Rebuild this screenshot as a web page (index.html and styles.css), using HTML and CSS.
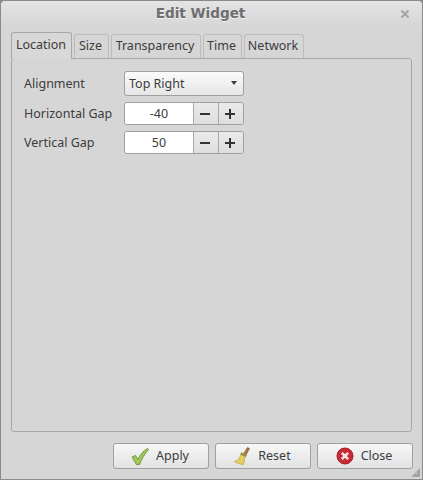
FILE: index.html
```html
<!DOCTYPE html>
<html lang="en">
<head>
<meta charset="utf-8">
<title>Edit Widget</title>
<link rel="stylesheet" href="styles.css">
</head>
<body>
<div class="window">
  <header class="titlebar">
    <span class="title">Edit Widget</span>
    <svg class="close-x" width="10" height="10" viewBox="0 0 10 10"><path d="M1.5 1.5L8.5 8.5M8.5 1.5L1.5 8.5" stroke="#a6a6a6" stroke-width="2.2"/></svg>
  </header>
  <div class="content">
    <nav class="tabs">
      <div class="tab active">Location</div>
      <div class="tab w-size">Size</div>
      <div class="tab w-trans">Transparency</div>
      <div class="tab w-time">Time</div>
      <div class="tab w-net">Network</div>
    </nav>
    <section class="panel">
      <div class="row">
        <label class="label">Alignment</label>
        <div class="combo"><span>Top Right</span><i class="caret"></i></div>
      </div>
      <div class="row">
        <label class="label">Horizontal Gap</label>
        <div class="spin">
          <div class="entry">-40</div>
          <div class="step"><svg width="10" height="10" viewBox="0 0 10 10"><path d="M0 5H10" stroke="#333" stroke-width="2"/></svg></div>
          <div class="step"><svg width="10" height="10" viewBox="0 0 10 10"><path d="M0 5H10M5 0V10" stroke="#333" stroke-width="2"/></svg></div>
        </div>
      </div>
      <div class="row">
        <label class="label">Vertical Gap</label>
        <div class="spin">
          <div class="entry">50</div>
          <div class="step"><svg width="10" height="10" viewBox="0 0 10 10"><path d="M0 5H10" stroke="#333" stroke-width="2"/></svg></div>
          <div class="step"><svg width="10" height="10" viewBox="0 0 10 10"><path d="M0 5H10M5 0V10" stroke="#333" stroke-width="2"/></svg></div>
        </div>
      </div>
    </section>
    <footer class="actions">
      <button class="btn">
        <svg width="20" height="20" viewBox="0 0 20 20"><path d="M2 11L5.5 9.5L8 13.5C10 9 13 5 17.5 2.5L18.5 3.5C14.5 8 11.5 13 9.5 18.5L6.5 18.5Z" fill="#a3c75c" stroke="#6f9a35" stroke-width="1"/></svg>
        <span>Apply</span>
      </button>
      <button class="btn">
        <svg width="20" height="20" viewBox="0 0 20 20"><path d="M11.5 8L15.5 1.5L17.5 2.5L14 9Z" fill="#a8743a" stroke="#7d5427" stroke-width="0.6"/><path d="M9.5 6.5L14.5 9.5L12.5 12C12.5 15 12 17 11.5 18.5C9 18.5 5.5 17.5 2.5 15.5C5 15 7 13 8 10.5Z" fill="#e6cf5c" stroke="#b49a35" stroke-width="0.6"/><path d="M9.5 6.5L14.5 9.5L13.5 11L8.5 8.5Z" fill="#8f8a5c"/></svg>
        <span>Reset</span>
      </button>
      <button class="btn">
        <svg width="20" height="20" viewBox="0 0 20 20"><circle cx="10" cy="10" r="8" fill="#c92a34" stroke="#a31d28"/><path d="M6.8 6.8L13.2 13.2M13.2 6.8L6.8 13.2" stroke="#f4e4e4" stroke-width="2.6"/></svg>
        <span>Close</span>
      </button>
    </footer>
    <svg class="grip" width="11" height="11" viewBox="0 0 11 11"><path d="M10 1V10H1Z" fill="#a3a3a3"/><path d="M7 5V7H5Z" fill="#d6d6d6"/></svg>
  </div>
</div>
</body>
</html>
```
FILE: styles.css
```css
* { box-sizing: border-box; }
html, body { margin: 0; padding: 0; }
body { width: 423px; height: 480px; overflow: hidden; background: #8a8a8a; font-family: "Noto Sans", "DejaVu Sans", sans-serif; font-size: 12.5px; color: #3c3c3c; }
.window { width: 423px; height: 480px; border: 1px solid #8b8b8b; border-radius: 5px 5px 0 0; background: #d6d6d6; display: flex; flex-direction: column; }
.titlebar { height: 26px; flex: none; display: flex; align-items: center; justify-content: center; padding: 0 22px 2px 0; position: relative; background: linear-gradient(#e4e4e4, #d6d6d6); border-radius: 4px 4px 0 0; }
.title { font-family: "DejaVu Sans", sans-serif; font-weight: bold; font-size: 13.6px; color: #6e6e6e; text-shadow: 0 1px 0 #f2f2f2; }
.close-x { position: absolute; right: 12px; top: 8px; }
.content { flex: 1; position: relative; display: flex; flex-direction: column; padding: 5px 10px 0; }
.tabs { display: flex; height: 26px; gap: 2px; align-items: flex-end; position: relative; z-index: 1; }
.tab { height: 24px; padding-right: 2px; border: 1px solid #bdbdbd; border-bottom: 0; border-radius: 3px 3px 0 0; text-align: center; background: #d6d6d6; line-height: 21px; }
.tab.active { width: 61px; height: 27px; padding-right: 1px; border-color: #a8a8a8; line-height: 24px; background: #d8d8d8; margin-bottom: -1px; }
.w-size { width: 35px; }
.w-trans { width: 90px; }
.w-time { width: 39px; }
.w-net { width: 60px; }
.panel { width: 401px; height: 374px; border: 1px solid #a8a8a8; border-radius: 3px; background: #d6d6d6; padding: 12px 12px 0; display: flex; flex-direction: column; gap: 6px; }
.row { display: flex; align-items: center; }
.label { width: 100px; flex: none; }
.combo { width: 120px; height: 25px; border: 1px solid #a0a0a0; border-radius: 3px; background: linear-gradient(#fbfbfb, #e6e6e6); display: flex; align-items: center; justify-content: space-between; padding: 0 6px 1px 4px; }
.caret { width: 0; height: 0; border-left: 3.5px solid transparent; border-right: 3.5px solid transparent; border-top: 4px solid #3c3c3c; }
.spin { width: 120px; height: 23px; display: flex; border: 1px solid #a0a0a0; border-radius: 3px; overflow: hidden; }
.entry { width: 68px; background: #fff; text-align: center; line-height: 21px; }
.step { flex: 1; display: flex; align-items: center; justify-content: center; padding-right: 2px; border-left: 1px solid #a8a8a8; background: linear-gradient(#eaeaea, #dedede); }
.actions { display: flex; justify-content: flex-end; gap: 6px; margin-top: 11px; margin-right: -1px; }
.btn { width: 96px; height: 26px; border: 1px solid #a0a0a0; border-radius: 3px; background: linear-gradient(#f7f7f7, #e2e2e2); display: flex; align-items: center; justify-content: center; gap: 6px; padding: 0 3px 1px 0; font: inherit; color: inherit; }
.grip { position: absolute; right: 1px; bottom: 1px; }
```
